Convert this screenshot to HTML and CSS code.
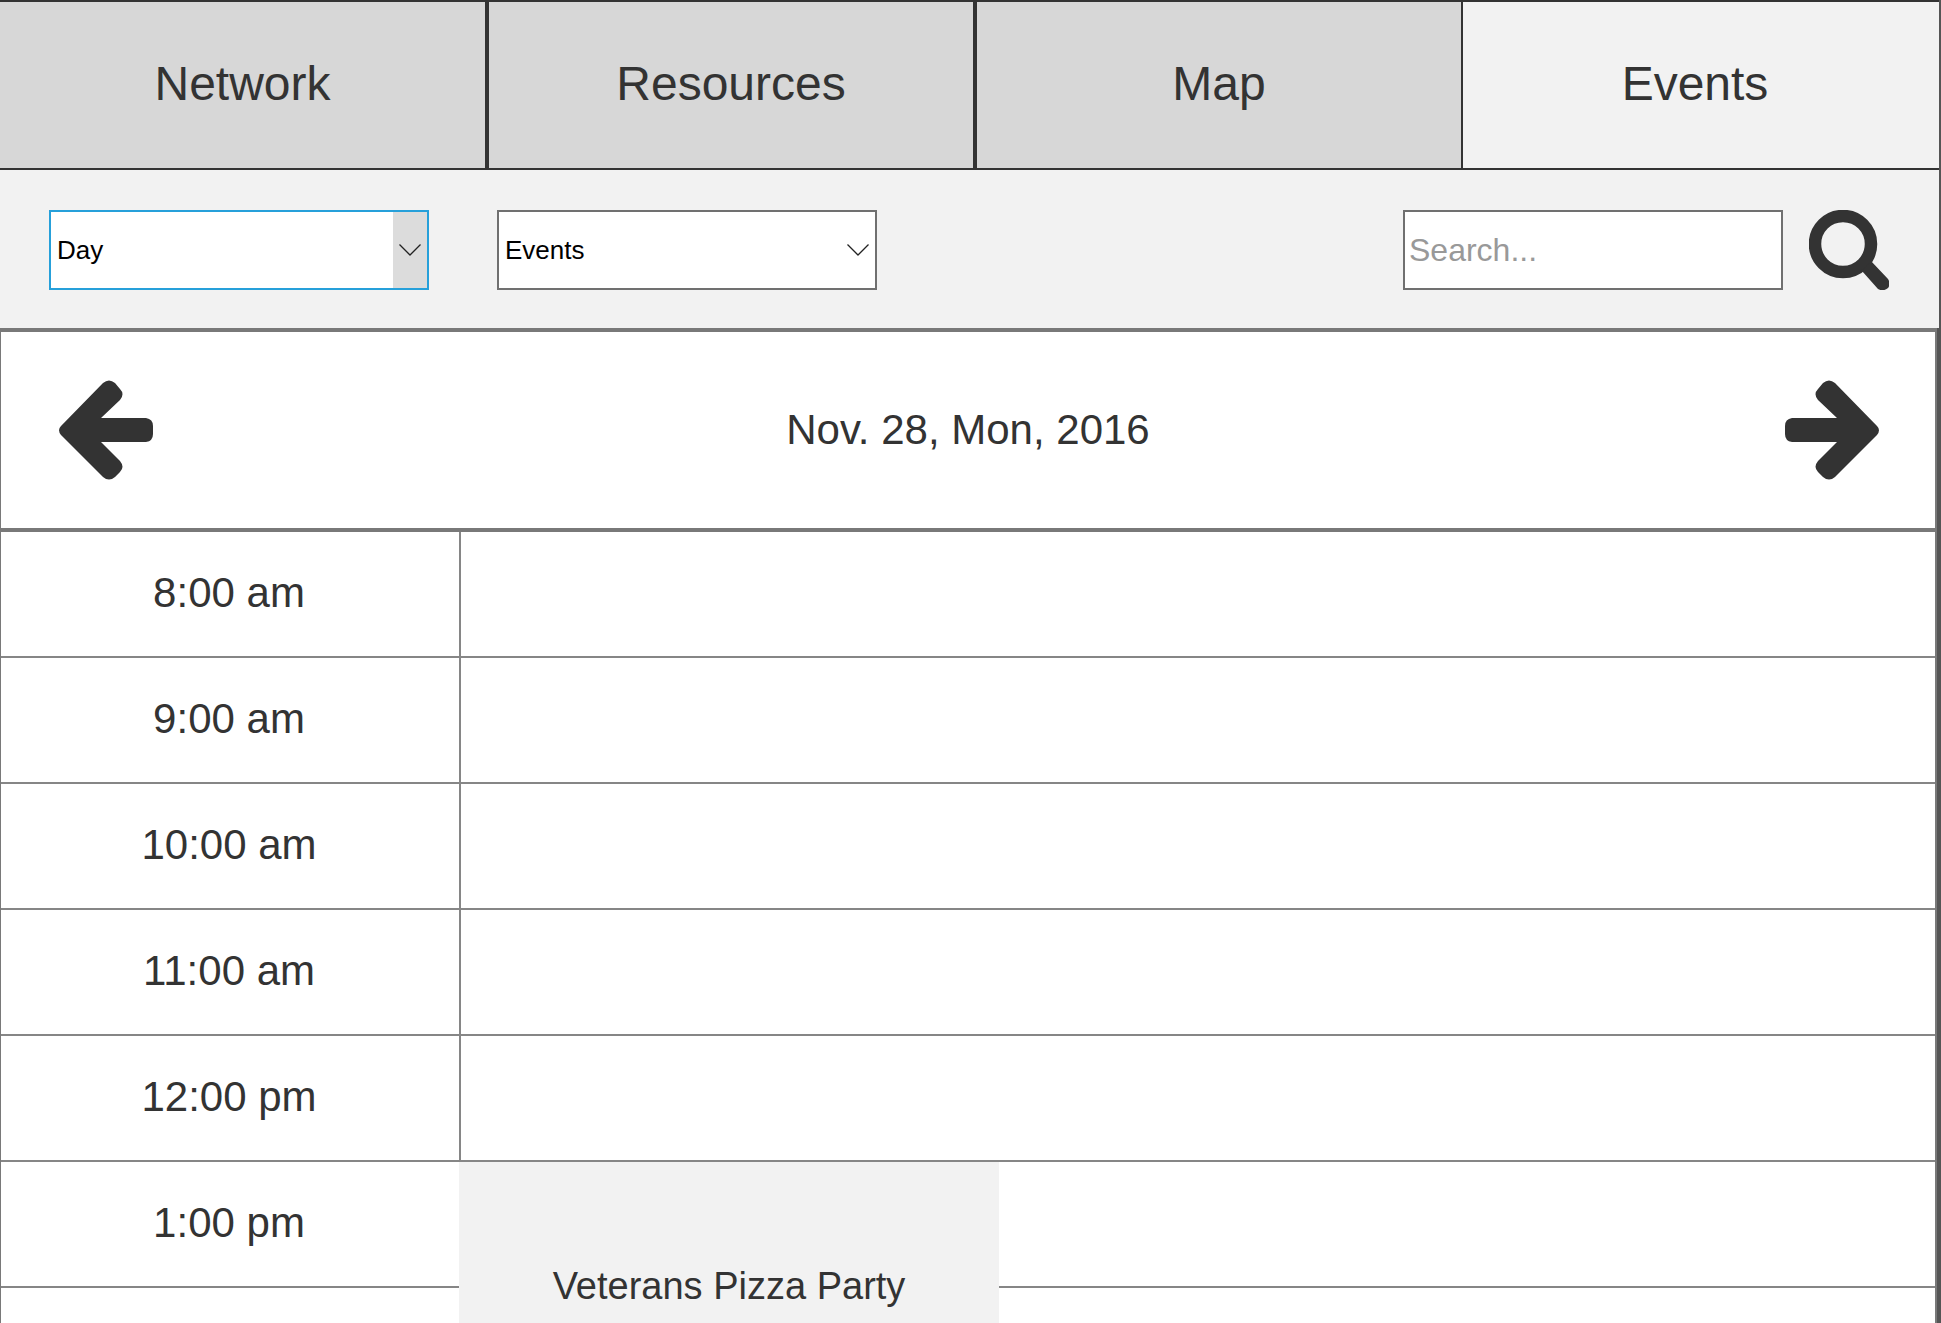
FILE: index.html
```html
<!DOCTYPE html>
<html lang="en">
<head>
<meta charset="utf-8">
<title>Events</title>
<link rel="stylesheet" href="styles.css">
</head>
<body>
<div class="app">
  <nav class="tabs">
    <a class="tab" href="#network">Network</a>
    <a class="tab" href="#resources">Resources</a>
    <a class="tab" href="#map">Map</a>
    <a class="tab tab-active" href="#events" aria-current="page">Events</a>
  </nav>

  <form class="toolbar">
    <div class="picker picker-focused">
      <select class="field" aria-label="View">
        <option>Day</option>
        <option>Week</option>
        <option>Month</option>
      </select>
      <span class="picker-arrow"><svg width="22" height="12" viewBox="0 0 22 12"><path d="M.5 .5 11 11 21.500 .5" fill="none" stroke="#222" stroke-width="1.300"/></svg></span>
    </div>
    <div class="picker">
      <select class="field" aria-label="Category">
        <option>Events</option>
      </select>
      <span class="picker-arrow"><svg width="22" height="12" viewBox="0 0 22 12"><path d="M.5 .5 11 11 21.500 .5" fill="none" stroke="#222" stroke-width="1.300"/></svg></span>
    </div>
    <input class="field search" type="text" placeholder="Search..." aria-label="Search">
    <button class="icon-button" type="submit" aria-label="Search">
      <svg width="80" height="80" viewBox="0 0 80 80"><circle cx="34" cy="34" r="28" fill="none" stroke="#333" stroke-width="12.500"/><path d="M50 62 57 57 62 51 79 69Q82 74 79 78Q74 82 69 79L53 61Z" fill="#333"/></svg>
    </button>
  </form>

  <main class="calendar">
    <header class="date-bar">
      <button class="icon-button" type="button" aria-label="Previous day">
        <svg width="94" height="100" viewBox="0 0 94 100"><path d="M2 46 44 3Q50-2 56 3L61 9Q66 14 61 20L42 38H87Q94 39 94 46V54Q94 61 87 62H42L61 81Q66 87 61 92L56 97Q50 102 44 97L2 55Q-2 50 2 46Z" fill="#333"/></svg>
      </button>
      <h1 class="date">Nov. 28, Mon, 2016</h1>
      <button class="icon-button" type="button" aria-label="Next day">
        <svg width="94" height="100" viewBox="0 0 94 100"><path d="M92 46 50 3Q44-2 38 3L33 9Q28 14 33 20L52 38H7Q0 39 0 46V54Q0 61 7 62H52L33 81Q28 87 33 92L38 97Q44 102 50 97L92 55Q96 50 92 46Z" fill="#333"/></svg>
      </button>
    </header>

    <div class="schedule">
      <table class="hours">
        <tbody>
          <tr><th scope="row">8:00 am</th><td></td></tr>
          <tr><th scope="row">9:00 am</th><td></td></tr>
          <tr><th scope="row">10:00 am</th><td></td></tr>
          <tr><th scope="row">11:00 am</th><td></td></tr>
          <tr><th scope="row">12:00 pm</th><td></td></tr>
          <tr><th scope="row">1:00 pm</th><td><a class="event" href="#pizza-party">Veterans Pizza Party</a></td></tr>
          <tr><th scope="row"></th><td></td></tr>
        </tbody>
      </table>
    </div>
  </main>
</div>
</body>
</html>
```
FILE: styles.css
```css
* {
  box-sizing: border-box;
}

body {
  margin: 0;
  background: #555;
  color: #333;
  font-family: "Liberation Sans", Arial, sans-serif;
}

svg {
  display: block;
}

.app {
  display: flex;
  flex-direction: column;
  height: 100vh;
  padding-right: 2px;
  overflow: hidden;
}

.tabs {
  display: grid;
  grid-template-columns: 487fr 488fr 488fr 476fr;
  flex: none;
  height: 170px;
  border: solid #333;
  border-width: 2px 0;
}

.tab {
  display: flex;
  align-items: center;
  justify-content: center;
  padding-bottom: 4px;
  border: solid #333;
  border-width: 0 2px;
  background: #d7d7d7;
  color: inherit;
  font-size: 48px;
  text-decoration: none;
}

.tab:first-child {
  border-left: 0;
}

.tab-active {
  border: 0;
  padding-right: 12px;
  background: #f2f2f2;
}

.toolbar {
  display: flex;
  flex: none;
  align-items: center;
  padding: 40px 50px 38px 49px;
  background: #f2f2f2;
}

.picker {
  position: relative;
  width: 380px;
  margin-right: 68px;
}

.field {
  width: 100%;
  height: 80px;
  margin: 0;
  padding: 0 6px;
  border: 2px solid #707070;
  border-radius: 0;
  outline: 0;
  background: #fff;
  color: #000;
  font-family: inherit;
  font-size: 26px;
  appearance: none;
}

.picker-focused .field {
  border-color: #26a0da;
}

.picker-arrow {
  position: absolute;
  inset: 2px 2px 2px auto;
  display: grid;
  place-items: center;
  width: 34px;
  pointer-events: none;
}

.picker-focused .picker-arrow {
  background: #dcdcdc;
}

.search {
  width: 380px;
  margin-left: auto;
  margin-right: 26px;
  padding: 0 4px;
  font-size: 32px;
}

.search::placeholder {
  color: #999;
  opacity: 1;
}

.icon-button {
  padding: 0;
  border: 0;
  background: none;
  cursor: pointer;
}

.calendar {
  display: flex;
  flex: 1;
  flex-direction: column;
  min-height: 0;
  margin-right: 2px;
  border: solid #797979;
  border-width: 0 2px 0 1px;
  background: #fff;
}

.date-bar {
  display: flex;
  flex: none;
  align-items: center;
  justify-content: space-between;
  height: 204px;
  padding: 0 56px 0 58px;
  border: solid #797979;
  border-width: 4px 0;
}

.date {
  margin: 0;
  padding-right: 2px;
  font-size: 42px;
  font-weight: 400;
}

.schedule {
  flex: 1;
  min-height: 0;
  overflow: hidden;
}

.hours {
  width: 100%;
  border-spacing: 0;
  table-layout: fixed;
}

.hours th,
.hours td {
  height: 126px;
  padding: 0 2px 2px 0;
  border-bottom: 2px solid #868686;
}

.hours th {
  width: 460px;
  border-right: 2px solid #868686;
  font-size: 42px;
  font-weight: 400;
}

.hours td {
  position: relative;
}

.event {
  position: absolute;
  top: 0;
  left: -2px;
  display: flex;
  align-items: center;
  justify-content: center;
  width: 540px;
  height: 248px;
  background: #f2f2f2;
  color: inherit;
  font-size: 38px;
  text-decoration: none;
}
```
